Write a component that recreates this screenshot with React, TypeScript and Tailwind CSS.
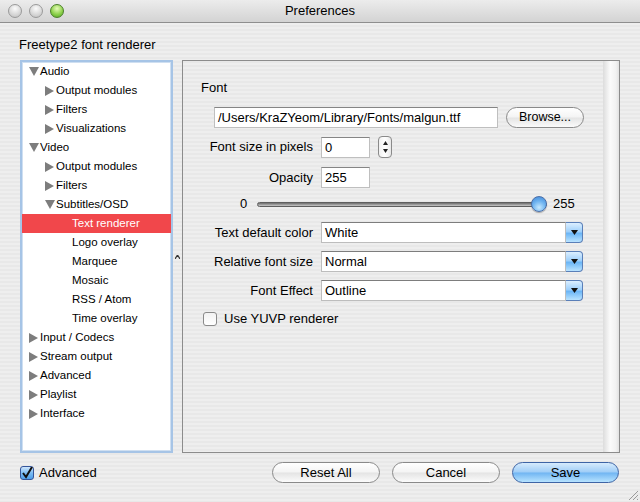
import React from "react";

const font = { fontFamily: '"Liberation Sans", Arial, sans-serif' };

type Node = { label: string; level: number; kind: "open" | "closed" | "leaf"; selected?: boolean };

const arbol: Node[] = [
  { label: "Audio", level: 0, kind: "open" },
  { label: "Output modules", level: 1, kind: "closed" },
  { label: "Filters", level: 1, kind: "closed" },
  { label: "Visualizations", level: 1, kind: "closed" },
  { label: "Video", level: 0, kind: "open" },
  { label: "Output modules", level: 1, kind: "closed" },
  { label: "Filters", level: 1, kind: "closed" },
  { label: "Subtitles/OSD", level: 1, kind: "open" },
  { label: "Text renderer", level: 2, kind: "leaf", selected: true },
  { label: "Logo overlay", level: 2, kind: "leaf" },
  { label: "Marquee", level: 2, kind: "leaf" },
  { label: "Mosaic", level: 2, kind: "leaf" },
  { label: "RSS / Atom", level: 2, kind: "leaf" },
  { label: "Time overlay", level: 2, kind: "leaf" },
  { label: "Input / Codecs", level: 0, kind: "closed" },
  { label: "Stream output", level: 0, kind: "closed" },
  { label: "Advanced", level: 0, kind: "closed" },
  { label: "Playlist", level: 0, kind: "closed" },
  { label: "Interface", level: 0, kind: "closed" },
];

const pads = ["pl-[7px]", "pl-[23px]", "pl-[39px]"];

function Triangulo({ kind }: { kind: Node["kind"] }) {
  return (
    <span className="w-[11px] h-[11px] flex items-center">
      {kind === "closed" && (
        <svg width="9" height="10" viewBox="0 0 9 10">
          <path d="M0 0 L9 5 L0 10 Z" fill="#7d7d7d" />
        </svg>
      )}
      {kind === "open" && (
        <svg width="10" height="9" viewBox="0 0 10 9">
          <path d="M0 0 L10 0 L5 9 Z" fill="#7d7d7d" />
        </svg>
      )}
    </span>
  );
}

function Popup({ value }: { value: string }) {
  return (
    <div className="flex w-[262px] h-[21px]">
      <div className="flex-1 bg-white border border-[#bdbdbd] border-t-[#7d7d7d] pl-[3px] text-[13px] leading-[19px] text-black">
        {value}
      </div>
      <div className="w-[17px] rounded-r-[4px] border border-[#5a7fb8] border-l-0 bg-[linear-gradient(#dcefff,#9fd0fb_45%,#6cb6f6_55%,#b9e3ff)] flex items-center justify-center">
        <svg width="7" height="5" viewBox="0 0 7 5">
          <path d="M0 0 L7 0 L3.5 5 Z" fill="#111" />
        </svg>
      </div>
    </div>
  );
}

function Boton({ children, azul }: { children: React.ReactNode; azul?: boolean }) {
  return (
    <div
      className={
        azul
          ? "w-[107px] h-[21px] rounded-full border border-[#3e64a5] bg-[linear-gradient(#d6ebfd,#9fcdf7_48%,#70b5f2_52%,#b7e3ff)] text-[13px] leading-[19px] text-center text-black"
          : "w-[108px] h-[21px] rounded-full border border-[#8a8a8a] bg-[linear-gradient(#ffffff,#f4f4f4_48%,#e4e4e4_52%,#fbfbfb)] text-[13px] leading-[19px] text-center text-black"
      }
    >
      {children}
    </div>
  );
}

function Semaforo({ verde }: { verde?: boolean }) {
  return (
    <div
      className={
        verde
          ? "w-[14px] h-[14px] rounded-full border border-[#4c7f2a] bg-[radial-gradient(circle_at_50%_30%,#e6fbb8,#8fd24e_55%,#4ea21f)]"
          : "w-[14px] h-[14px] rounded-full border border-[#9a9a9a] bg-[radial-gradient(circle_at_50%_30%,#fbfbfb,#d9d9d9_55%,#bdbdbd)]"
      }
    />
  );
}

export default function App() {
  return (
    <div className="w-[640px] h-[502px] flex flex-col overflow-hidden relative" style={font}>
      {/* barra de título */}
      <div className="h-[23px] flex items-center border-b border-[#8e8e8e] bg-[linear-gradient(#ececec,#d3d3d3)] relative">
        <div className="flex gap-[7px] pl-[8px]">
          <Semaforo />
          <Semaforo />
          <Semaforo verde />
        </div>
        <div className="absolute inset-0 flex items-center justify-center text-[13px] text-black">
          Preferences
        </div>
      </div>

      <div className="flex-1 flex flex-col bg-[repeating-linear-gradient(180deg,#eeeeee_0px,#eeeeee_2px,#e8e8e8_2px,#e8e8e8_4px)]">
        <div className="pl-[19px] pt-[14px] text-[13px] leading-[16px] text-black">Freetype2 font renderer</div>

        <div className="flex mt-[7px] h-[393px]">
          {/* árbol */}
          <div className="ml-[20px] w-[153px] bg-white border-2 border-[#a6c4e6] shadow-[inset_0_0_0_1px_#cfdff1]">
            {arbol.map((n, i) => (
              <div
                key={i}
                className={`h-[19px] flex items-center ${pads[n.level]} ${n.selected ? "bg-[#f1474b] text-white" : "text-black"}`}
              >
                <Triangulo kind={n.kind} />
                <span className="text-[11.5px] leading-[19px] whitespace-nowrap">{n.label}</span>
              </div>
            ))}
          </div>

          {/* divisor */}
          <div className="w-[9px] flex items-center justify-center">
            <svg width="5" height="4" viewBox="0 0 5 4">
              <path d="M0 4 L2.5 0 L5 4" fill="none" stroke="#333" strokeWidth="1.2" />
            </svg>
          </div>

          {/* panel */}
          <div className="w-[438px] h-[393px] border border-[#8c8c8c] flex">
            <div className="flex-1 flex flex-col">
              <div className="pl-[18px] pt-[19px] text-[13px] leading-[16px] text-black">Font</div>

              <div className="flex items-center mt-[11px] pl-[31px] gap-[8px]">
                <div className="w-[284px] h-[21px] bg-white border border-[#bfbfbf] border-t-[#858585] pl-[3px] text-[13px] leading-[19px] text-black whitespace-nowrap overflow-hidden">
                  /Users/KraZYeom/Library/Fonts/malgun.ttf
                </div>
                <div className="w-[78px] h-[21px] rounded-full border border-[#8a8a8a] bg-[linear-gradient(#ffffff,#f4f4f4_48%,#e4e4e4_52%,#fbfbfb)] text-[12.5px] leading-[19px] text-center text-black">
                  Browse...
                </div>
              </div>

              <div className="flex items-center mt-[8px] gap-[8px]">
                <div className="w-[130px] text-right text-[13px] text-black">Font size in pixels</div>
                <div className="w-[49px] h-[21px] bg-white border border-[#bfbfbf] border-t-[#858585] pl-[3px] text-[13px] leading-[19px] text-black">
                  0
                </div>
                <div className="w-[14px] h-[22px] rounded-[4px] border border-[#8a8a8a] bg-[linear-gradient(90deg,#f0f0f0,#ffffff,#e8e8e8)] flex flex-col items-center justify-between py-[4px]">
                  <svg width="5" height="4" viewBox="0 0 5 4">
                    <path d="M0 4 L2.5 0 L5 4 Z" fill="#222" />
                  </svg>
                  <svg width="5" height="4" viewBox="0 0 5 4">
                    <path d="M0 0 L5 0 L2.5 4 Z" fill="#222" />
                  </svg>
                </div>
              </div>

              <div className="flex items-center mt-[9px] gap-[8px]">
                <div className="w-[130px] text-right text-[13px] text-black">Opacity</div>
                <div className="w-[49px] h-[21px] bg-white border border-[#bfbfbf] border-t-[#858585] pl-[3px] text-[13px] leading-[19px] text-black">
                  255
                </div>
              </div>

              <div className="flex items-center h-[16px] mt-[8px] pl-[57px]">
                <span className="text-[13px] text-black w-[10px]">0</span>
                <div className="w-[290px] ml-[7px] relative flex items-center">
                  <div className="w-full h-[5px] rounded-full border border-[#5f5f5f] bg-[linear-gradient(#6d6d6d,#9a9a9a,#c9c9c9)]" />
                  <div className="absolute right-0 w-[16px] h-[16px] rounded-full border border-[#4b6fa8] bg-[radial-gradient(circle_at_50%_75%,#c6e9ff,#6fb4f0_50%,#3d84d6)] shadow-[0_1px_1px_rgba(0,0,0,0.3)]" />
                </div>
                <span className="ml-[6px] text-[13px] text-black">255</span>
              </div>

              <div className="flex items-center mt-[10px] gap-[8px]">
                <div className="w-[130px] text-right text-[13px] text-black">Text default color</div>
                <Popup value="White" />
              </div>
              <div className="flex items-center mt-[8px] gap-[8px]">
                <div className="w-[130px] text-right text-[13px] text-black">Relative font size</div>
                <Popup value="Normal" />
              </div>
              <div className="flex items-center mt-[8px] gap-[8px]">
                <div className="w-[130px] text-right text-[13px] text-black">Font Effect</div>
                <Popup value="Outline" />
              </div>

              <div className="flex items-center mt-[8px] pl-[20px] gap-[7px]">
                <div className="w-[14px] h-[14px] rounded-[3px] border border-[#8a8a8a] bg-[linear-gradient(#f2f2f2,#ffffff)]" />
                <span className="text-[13px] text-black">Use YUVP renderer</span>
              </div>
            </div>
            <div className="w-[16px] bg-[linear-gradient(90deg,#dcdcdc,#fbfbfb_45%,#f2f2f2_80%,#e2e2e2)]" />
          </div>
        </div>

        {/* fila inferior */}
        <div className="flex items-center mt-[9px] h-[21px]">
          <div className="flex items-center ml-[20px] gap-[5px] w-[252px]">
            <div className="w-[14px] h-[14px] rounded-[3px] border border-[#34559a] bg-[linear-gradient(#cfe6fc,#7cbcf3_50%,#4e9ee8)] flex items-center justify-center">
              <svg width="12" height="12" viewBox="0 0 12 12">
                <path d="M2 6 L5 10 L11 0" fill="none" stroke="#111" strokeWidth="2" />
              </svg>
            </div>
            <span className="text-[13px] text-black">Advanced</span>
          </div>
          <div className="flex gap-[12px]">
            <Boton>Reset All</Boton>
            <Boton>Cancel</Boton>
            <Boton azul>Save</Boton>
          </div>
        </div>
      </div>

      <svg className="absolute right-[1px] bottom-[1px]" width="11" height="11" viewBox="0 0 11 11">
        <path d="M10 1 L1 10 M10 5 L5 10 M10 9 L9 10" stroke="#9a9a9a" strokeWidth="1" />
      </svg>
    </div>
  );
}
